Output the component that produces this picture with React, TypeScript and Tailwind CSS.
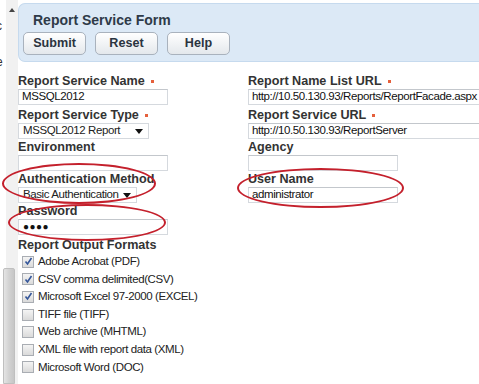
import React from 'react';

const font = { fontFamily: '"Liberation Sans", Arial, sans-serif' };

function Label({ text, req, className = '' }: { text: string; req?: boolean; className?: string }) {
  return (
    <div className={`h-[16px] flex items-center text-[12.6px] font-bold text-[#333] leading-none ${className}`}>
      {text}
      {req && <span className="w-[3px] h-[3px] bg-[#e5603c] ml-[6px]" />}
    </div>
  );
}

function TextBox({ value, w, pass }: { value?: string; w: string; pass?: boolean }) {
  return (
    <div
      className={`${w} h-[16px] border border-[#d5d9de] border-t-[#c3c7cc] bg-white flex items-center px-[3px] text-[11.5px] tracking-[-0.4px] text-[#111] leading-none whitespace-nowrap overflow-hidden`}
    >
      {pass ? <span className="text-[10px] tracking-[0.5px] pl-[1px]">●●●●</span> : value}
    </div>
  );
}

function Select({ value, w }: { value: string; w: string }) {
  return (
    <div
      className={`${w} h-[16px] border border-[#d5d9de] bg-white flex items-center justify-between pl-[4px] pr-[5px] text-[11.5px] tracking-[-0.4px] text-[#222] leading-none whitespace-nowrap`}
    >
      <span>{value}</span>
      <svg width="8" height="5" viewBox="0 0 8 5">
        <path d="M0 0 H8 L4 5 Z" fill="#111" />
      </svg>
    </div>
  );
}

function Check({ label, on }: { label: string; on?: boolean }) {
  return (
    <div className="h-[17.6px] flex items-center gap-[4px] text-[11.5px] tracking-[-0.4px] text-[#222] leading-none">
      <span className="w-[12px] h-[12px] border border-[#a9adb3] bg-gradient-to-b from-[#f4f4f4] to-[#dadada] flex items-center justify-center">
        {on && (
          <svg width="9" height="9" viewBox="0 0 9 9">
            <path d="M1.5 4.5 L3.5 7 L7.5 1" fill="none" stroke="#34569a" strokeWidth="1.6" />
          </svg>
        )}
      </span>
      <span>{label}</span>
    </div>
  );
}

function Btn({ text }: { text: string }) {
  return (
    <div className="w-[63px] h-[23px] rounded-[5px] border border-[#a9b2bd] bg-gradient-to-b from-white to-[#e4e8ec] flex items-center justify-center text-[12.6px] font-bold text-[#2b3440]">
      {text}
    </div>
  );
}

export default function App() {
  return (
    <div style={font} className="w-[479px] h-[384px] bg-white relative overflow-hidden flex">
      {/* left strip + scrollbar */}
      <div className="w-[18px] flex shrink-0">
        <div className="w-[6px] text-[12px] text-[#333] leading-none overflow-hidden">
          <span className="block mt-[20px] -ml-[4px]">c</span>
          <span className="block mt-[24px] -ml-[4px]">e</span>
        </div>
        <div className="w-[12px] bg-[#f1f1f1] flex flex-col items-center">
          <svg className="mt-[8px]" width="6" height="4" viewBox="0 0 6 4">
            <path d="M0 4 L3 0 L6 4 Z" fill="#444" />
          </svg>
          <div className="mt-[256px] -ml-[6px] w-[12px] flex-1 rounded-t-[2px] border border-[#bfbfbf] bg-gradient-to-r from-[#e4e4e4] via-[#d2d2d2] to-[#c6c6c6]" />
        </div>
      </div>

      <div className="flex-1 flex flex-col">
        {/* header */}
        <div className="mt-[3px] h-[59px] bg-[#dce9f6] border border-r-0 border-[#c6daee] rounded-l-[7px] pl-[4px]">
          <div className="pl-[10px] pt-[9px] text-[14px] font-bold text-[#2e3a48] leading-none">Report Service Form</div>
          <div className="flex gap-[9px] mt-[5px]">
            <Btn text="Submit" />
            <Btn text="Reset" />
            <Btn text="Help" />
          </div>
        </div>

        {/* form */}
        <div className="grid grid-cols-[230px_1fr] mt-[11px]">
          <div className="flex flex-col">
            <Label text="Report Service Name" req />
            <TextBox w="w-[150px]" value="MSSQL2012" />
            <Label text="Report Service Type" req className="mt-[2px]" />
            <Select w="w-[131px]" value="MSSQL2012 Report" />
            <Label text="Environment" />
            <TextBox w="w-[150px]" />
            <Label text="Authentication Method" />
            <Select w="w-[119px]" value="Basic Authentication" />
            <Label text="Password" />
            <TextBox w="w-[150px]" pass />
            <Label text="Report Output Formats" className="mt-[2px]" />
            <div className="pl-[4px]">
              <Check on label="Adobe Acrobat (PDF)" />
              <Check on label="CSV comma delimited(CSV)" />
              <Check on label="Microsoft Excel 97-2000 (EXCEL)" />
              <Check label="TIFF file (TIFF)" />
              <Check label="Web archive (MHTML)" />
              <Check label="XML file with report data (XML)" />
              <Check label="Microsoft Word (DOC)" />
            </div>
          </div>
          <div className="flex flex-col">
            <Label text="Report Name List URL" req />
            <TextBox w="w-[240px]" value="http://10.50.130.93/Reports/ReportFacade.aspx" />
            <Label text="Report Service URL" req className="mt-[2px]" />
            <TextBox w="w-[240px]" value="http://10.50.130.93/ReportServer" />
            <Label text="Agency" />
            <TextBox w="w-[150px]" />
            <Label text="User Name" />
            <TextBox w="w-[150px]" value="administrator" />
          </div>
        </div>
      </div>

      {/* red annotation ellipses */}
      <div className="absolute left-[2px] top-[163px] w-[154px] h-[41px] rounded-[50%] border-2 border-[#c4202c]" />
      <div className="absolute left-[8px] top-[204px] w-[158px] h-[37px] rounded-[50%] border-2 border-[#c4202c]" />
      <div className="absolute left-[237px] top-[168px] w-[167px] h-[40px] rounded-[50%] border-2 border-[#c4202c]" />
    </div>
  );
}
